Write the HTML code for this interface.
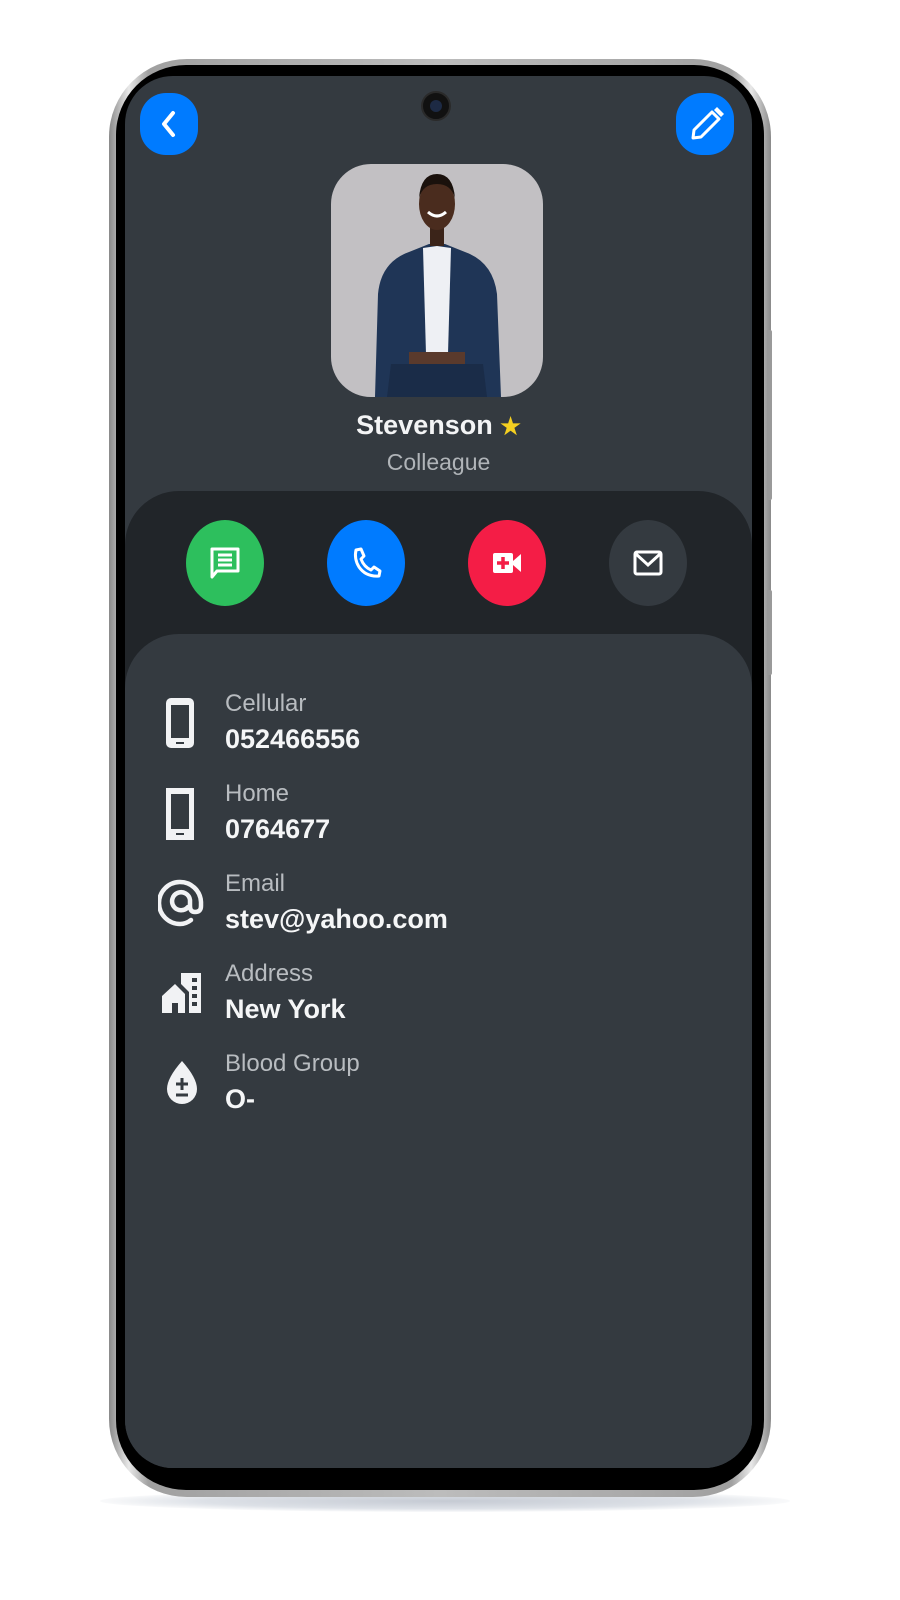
<!DOCTYPE html>
<html><head><style>
*{margin:0;padding:0;box-sizing:border-box}
body{width:900px;height:1600px;background:#fff;position:relative;overflow:hidden;font-family:"Liberation Sans",sans-serif}
.abs{position:absolute}
.shadow{left:100px;top:1490px;width:690px;height:22px;border-radius:50%;background:radial-gradient(ellipse at center,#c5cad3 0%,#dde1e7 50%,rgba(255,255,255,0) 75%)}
.frame{left:109px;top:59px;width:662px;height:1438px;border-radius:78px;background:linear-gradient(90deg,#8a8a8a,#e8e8e8 3%,#a0a0a0 6%,#bcbcbc 50%,#a0a0a0 94%,#e8e8e8 97%,#8a8a8a);}
.black{left:116px;top:65px;width:648px;height:1425px;border-radius:70px;background:#000}
.screen{left:125px;top:76px;width:627px;height:1392px;border-radius:48px;background:#343a40;overflow:hidden}
.btn{width:58px;height:62px;border-radius:26px;background:#007bff}
.act{top:415px;left:0;width:627px;height:200px;background:#212529;border-radius:54px 54px 0 0}
.info{top:558px;left:0;width:627px;height:850px;background:#343a40;border-radius:54px 54px 0 0}
.circ{top:444px;width:78px;height:86px;border-radius:50%;display:flex;align-items:center;justify-content:center}
.lbl{left:100px;font-size:24px;color:#b8bcc0}
.val{left:100px;font-size:27px;font-weight:bold;color:#f5f6f7}
.side{background:#9a9a9a;width:5px;border-radius:2px}
</style></head><body>
<div class="abs shadow"></div>
<div class="abs frame"></div>
<div class="abs side" style="left:767px;top:330px;height:170px"></div>
<div class="abs side" style="left:767px;top:590px;height:85px"></div>
<div class="abs black"></div>
<div class="abs screen">
  <div class="abs" style="left:296px;top:15px;width:30px;height:30px;border-radius:50%;background:#111;border:2px solid #2a2a2a"><div style="margin:7px;width:12px;height:12px;border-radius:50%;background:#1d2a44"></div></div>
  <div class="abs btn" style="left:15px;top:17px"><svg width="58" height="62"><path d="M33 20 L24 31 L33 42" stroke="#fff" stroke-width="4" fill="none" stroke-linecap="round" stroke-linejoin="round"/></svg></div>
  <div class="abs btn" style="left:551px;top:17px"><svg width="58" height="62"><path d="M17 45 L18 37 L36 19 L43 26 L25 44 Z" stroke="#fff" stroke-width="3" fill="none" stroke-linejoin="round"/><path d="M38 17 L41 14 L48 21 L45 24 Z" fill="#fff"/></svg></div>
  <div class="abs" style="left:206px;top:88px;width:212px;height:233px;border-radius:40px;background:#c2c0c3;overflow:hidden">
    <svg width="212" height="233">
      <path d="M44 233 L47 130 Q50 98 78 88 L98 80 L114 80 L134 88 Q162 98 166 130 L170 233 Z" fill="#1f3556"/>
      <path d="M92 84 L106 82 L120 84 L117 190 L95 190 Z" fill="#eef0f4"/>
      <rect x="78" y="188" width="56" height="12" fill="#5a3a2c"/>
      <path d="M60 200 L152 200 L156 233 L56 233 Z" fill="#1a2c48"/>
      <rect x="99" y="62" width="14" height="20" fill="#3b2419"/>
      <ellipse cx="106" cy="40" rx="18" ry="26" fill="#4a2c1e"/>
      <path d="M88 34 Q90 10 106 10 Q122 10 124 34 Q120 20 106 20 Q92 20 88 34Z" fill="#1a110c"/>
      <path d="M97 48 Q106 56 115 48" stroke="#fff" stroke-width="3" fill="none"/>
    </svg>
  </div>
  <div class="abs" style="left:0;top:334px;width:627px;text-align:center;font-size:27px;font-weight:bold;color:#f3f4f5">Stevenson <span style="color:#f5d020;font-size:23px">★</span></div>
  <div class="abs" style="left:0;top:373px;width:627px;text-align:center;font-size:23px;color:#b0b4b8">Colleague</div>
  <div class="abs act"></div>
  <div class="abs circ" style="left:61px;background:#2dbf5d"><svg width="40" height="40" viewBox="0 0 40 40"><path d="M7 6 H33 V28 H12 L7 34 Z" stroke="#fff" stroke-width="3" fill="none" stroke-linejoin="round"/><path d="M13 12H27M13 17H27M13 22H27" stroke="#fff" stroke-width="3"/></svg></div>
  <div class="abs circ" style="left:202px;background:#007bff"><svg width="40" height="40" viewBox="0 0 40 40"><path d="M10 7 L15 6 L18 13 L15 16 Q18 24 25 27 L28 24 L34 28 L33 33 Q20 34 13 24 Q8 16 10 7Z" stroke="#fff" stroke-width="3" fill="none" stroke-linejoin="round"/></svg></div>
  <div class="abs circ" style="left:343px;background:#f41d46"><svg width="40" height="40" viewBox="0 0 40 40"><rect x="6" y="10" width="20" height="20" rx="2" fill="#fff"/><path d="M26 18 L34 11 V29 L26 22Z" fill="#fff"/><path d="M16 14V26M10 20H22" stroke="#f41d46" stroke-width="3.5"/></svg></div>
  <div class="abs circ" style="left:484px;background:#343a40"><svg width="40" height="40" viewBox="0 0 40 40"><rect x="7" y="9" width="26" height="22" rx="2" stroke="#fff" stroke-width="3" fill="none"/><path d="M8 11 L20 22 L32 11" stroke="#fff" stroke-width="3" fill="none"/></svg></div>
  <div class="abs info">
    <svg class="abs" style="left:36px;top:62px" width="40" height="58"><rect x="5" y="2" width="28" height="50" rx="5" fill="#f1f2f4"/><rect x="10" y="9" width="18" height="33" fill="#343a40"/><rect x="15" y="46" width="8" height="2" fill="#343a40"/></svg>
    <div class="abs lbl" style="top:56px">Cellular</div>
    <div class="abs val" style="top:90px">052466556</div>
    <svg class="abs" style="left:36px;top:152px" width="40" height="58"><rect x="5" y="2" width="28" height="52" fill="#f1f2f4"/><rect x="10" y="8" width="18" height="35" fill="#343a40"/><rect x="15" y="47" width="8" height="2" fill="#343a40"/></svg>
    <div class="abs lbl" style="top:146px">Home</div>
    <div class="abs val" style="top:180px">0764677</div>
    <svg class="abs" style="left:33px;top:242px" width="48" height="54" viewBox="0 0 48 54"><path d="M33 44 Q28 48 22 48 A21 21 0 1 1 43 26 V30 Q43 36 37 36 Q32 36 32 30 V24 A9 9 0 1 0 30 31" stroke="#f1f2f4" stroke-width="4.5" fill="none" stroke-linecap="round"/></svg>
    <div class="abs lbl" style="top:236px">Email</div>
    <div class="abs val" style="top:270px">stev@yahoo.com</div>
    <svg class="abs" style="left:34px;top:334px" width="46" height="50" viewBox="0 0 46 50"><path d="M3 28 L16 16 L26 26 V45 H19 V35 H13 V45 H3Z" fill="#f1f2f4"/><path d="M22 5 H42 V45 H30 V24 L22 16Z" fill="#f1f2f4"/><rect x="33" y="10" width="5" height="4" fill="#343a40"/><rect x="33" y="18" width="5" height="4" fill="#343a40"/><rect x="33" y="26" width="5" height="4" fill="#343a40"/><rect x="33" y="34" width="5" height="4" fill="#343a40"/></svg>
    <div class="abs lbl" style="top:326px">Address</div>
    <div class="abs val" style="top:360px">New York</div>
    <svg class="abs" style="left:36px;top:424px" width="42" height="50" viewBox="0 0 42 50"><path d="M21 3 Q6 20 6 31 A15 15 0 0 0 36 31 Q36 20 21 3Z" fill="#f1f2f4"/><path d="M21 20V32M15 26H27M15 37H27" stroke="#343a40" stroke-width="3"/></svg>
    <div class="abs lbl" style="top:416px">Blood Group</div>
    <div class="abs val" style="top:450px">O-</div>
  </div>
</div>
</body></html>
